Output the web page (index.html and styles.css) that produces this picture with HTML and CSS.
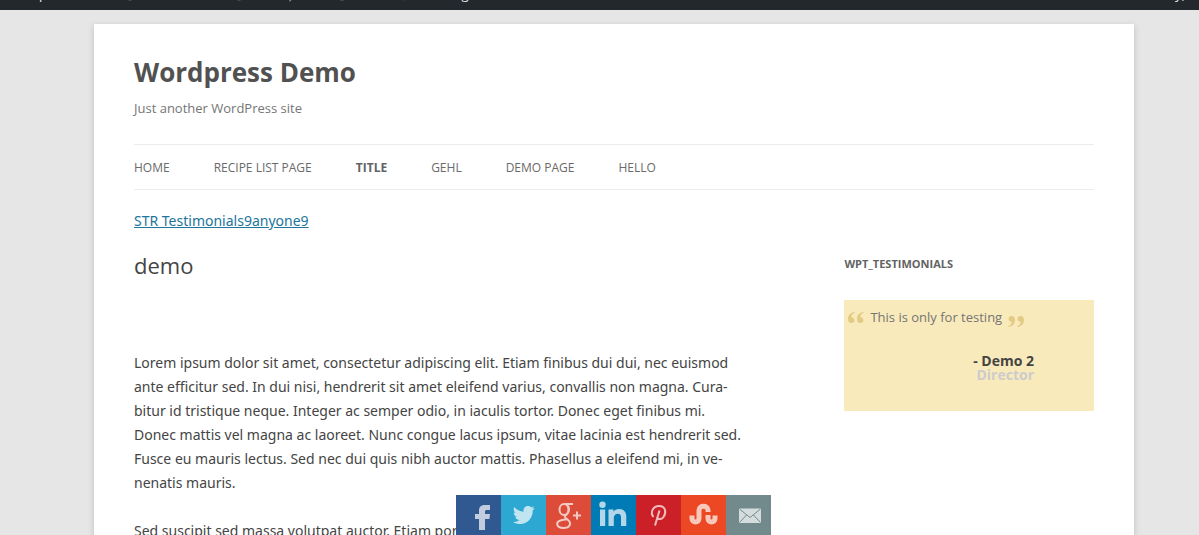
FILE: index.html
```html
<!DOCTYPE html>
<html lang="en">
<head>
    <meta charset="UTF-8">
    <meta name="viewport" content="width=device-width, initial-scale=1.0">
    <title>demo | Wordpress Demo</title>
    <link rel="stylesheet" href="styles.css">
</head>
<body>

    <!-- admin bar -->
    <div class="adminbar">
        <a class="ab-site" href="#">Wordpress Demo</a>
        <a class="ab-customize" href="#">
            <svg viewBox="0 0 20 20"><path d="M18 2c-1-1-5 2-9 7l3 3c4-4 7-9 6-10zM8 10c-3 0-2 4-6 6 3 2 9 1 9-3z"/></svg>
            Customize
        </a>
        <a class="ab-updates" href="#">
            <svg viewBox="0 0 20 20"><path d="M10 3a7 7 0 0 1 6 4l2-1v5h-5l2-2a5 5 0 0 0-9 0H3a7 7 0 0 1 7-6zM10 17a7 7 0 0 1-6-4l-2 1V9h5l-2 2a5 5 0 0 0 9 0h3a7 7 0 0 1-7 6z"/></svg>
            6
        </a>
        <a class="ab-comments" href="#">
            <svg viewBox="0 0 20 20"><path d="M3 3h14v10H9l-5 6v-6H3z"/></svg>
            0
        </a>
        <a class="ab-new" href="#">
            <svg viewBox="0 0 20 20"><path d="M8 4h4v4h4v4h-4v5H8v-5H4V8h4z"/></svg>
            New
        </a>
        <a class="ab-edit" href="#">
            <svg viewBox="0 0 20 20"><path d="M13 3l4 4-9 9-5 1 1-5z"/></svg>
            Edit Page
        </a>
        <a class="ab-account" href="#">Howdy,</a>
    </div>

    <div class="page">
        <div class="site">
            <header class="site-header">
                <h1 class="site-title"><a href="#">Wordpress Demo</a></h1>
                <h2 class="site-description">Just another WordPress site</h2>
                <nav class="main-navigation">
                    <ul>
                        <li><a href="#">Home</a></li>
                        <li><a href="#">Recipe List Page</a></li>
                        <li class="current"><a href="#">Title</a></li>
                        <li><a href="#">gehl</a></li>
                        <li><a href="#">Demo Page</a></li>
                        <li><a href="#">hello</a></li>
                    </ul>
                </nav>
            </header>

            <div class="top-link"><a href="#">STR Testimonials9anyone9</a></div>

            <div class="main">
                <article class="content">
                    <h1 class="entry-title">demo</h1>
                    <div class="entry-content">
                        <p>Lorem ipsum dolor sit amet, consectetur adipiscing elit. Etiam finibus dui dui, nec euismod<br>
                        ante efficitur sed. In dui nisi, hendrerit sit amet eleifend varius, convallis non magna. Cura-<br>
                        bitur id tristique neque. Integer ac semper odio, in iaculis tortor. Donec eget finibus mi.<br>
                        Donec mattis vel magna ac laoreet. Nunc congue lacus ipsum, vitae lacinia est hendrerit sed.<br>
                        Fusce eu mauris lectus. Sed nec dui quis nibh auctor mattis. Phasellus a eleifend mi, in ve-<br>
                        nenatis mauris.</p>
                        <p>Sed suscipit sed massa volutpat auctor. Etiam porta.</p>
                    </div>
                </article>

                <aside class="sidebar">
                    <h3 class="widget-title">wpt_testimonials</h3>
                    <div class="testimonial">
                        <blockquote>
                            <svg class="quote quote-open" viewBox="0 0 16 11"><path id="q" d="M6.500 0C2.500.5 0 3 0 7c0 2.600 1.400 4 3.300 4a2.900 2.900 0 0 0 3-3c0-1.700-1.200-2.800-2.800-2.800C3.300 3 4.500 1.500 6.800.8z"/><use href="#q" x="9"/></svg>
                            <span>This is only for testing</span>
                            <svg class="quote quote-close" viewBox="0 0 16 11"><use href="#q" transform="rotate(180 8 5.500)"/><use href="#q" transform="rotate(180 3.500 5.500)"/></svg>
                        </blockquote>
                        <p class="author">- Demo 2</p>
                        <p class="role">Director</p>
                    </div>
                </aside>
            </div>
        </div>
    </div>

    <!-- share buttons -->
    <div class="share">
        <a class="facebook" href="#" aria-label="Facebook">
            <svg viewBox="0 0 45 40"><path d="M23 35V24h-4v-5h4v-3.500c0-4 2.500-5.500 6-5.500h5v5h-3c-1.500 0-2 .6-2 1.800V19h5l-.6 5H29v11z"/></svg>
        </a>
        <a class="twitter" href="#" aria-label="Twitter">
            <svg viewBox="0 0 45 40"><path d="M34 13.200l-2.300 2.300C31.900 23.500 26 29 19.500 29c-2.800 0-5.300-.8-7.500-2.100 2.500.2 4.700-.4 6.500-1.800-2-.1-3.600-1.400-4.200-3.100h2c-2.200-.5-3.600-2.300-3.600-4.500l2 .5c-2-1.400-2.600-3.900-1.400-6 2.400 2.800 5.500 4.500 9.300 4.700-.7-3.100 1.500-5.700 4.400-5.700 1.300 0 2.500.5 3.300 1.400l2.900-1.100-1.900 2.500z"/></svg>
        </a>
        <a class="google" href="#" aria-label="Google Plus">
            <svg viewBox="0 0 45 40">
                <g class="line">
                    <ellipse cx="18" cy="14.500" rx="4.500" ry="5.500"/>
                    <path d="M27 9h-8M21 10c3 2.500 2.500 7-.5 9.500-3 2.500-1.500 3 1 5 5 4 2 8.500-4 8.500-7.500 0-8-6-3-7.500 2-.8 4-1 6-1"/>
                </g>
                <path d="M30 16.500h2v3h3v2h-3v3h-2v-3h-3v-2h3z"/>
            </svg>
        </a>
        <a class="linkedin" href="#" aria-label="LinkedIn">
            <svg viewBox="0 0 45 40"><circle cx="11.500" cy="9.700" r="3.200"/><path d="M9 14.500h5.200V31H9zM17.500 14.500h5v2.300c1.300-1.800 3-2.700 5.500-2.700 5 0 7.300 3 7.300 8V31H30v-8.300c0-2.500-.8-4-3-4s-4.200 1.500-4.200 4.300v8h-5.300z"/></svg>
        </a>
        <a class="pinterest" href="#" aria-label="Pinterest">
            <svg viewBox="0 0 45 40"><path class="line" d="M17.500 22c-4-5 0-11 5.500-11 7 0 7.500 7 4.500 11-2 3-6 2.500-6.500 0M23.500 15.500L19 30.500"/></svg>
        </a>
        <a class="stumble" href="#" aria-label="StumbleUpon">
            <svg viewBox="0 0 45 40"><path class="thick" d="M11 20.500v3c0 4.500 7 4.500 7 0V15c0-5 9-5 9 0v2M27 20v3.500c0 4.500 7 4.500 7 0v-3"/></svg>
        </a>
        <a class="email" href="#" aria-label="Email">
            <svg viewBox="0 0 45 40"><path d="M13 13.500h22V28H13z"/><path class="flap" d="M13.500 14L24 22.500 34.500 14M13.500 27.500l7-7.500M34.500 27.500l-7-7.500"/></svg>
        </a>
    </div>

</body>
</html>
```
FILE: styles.css
```css
* {
    box-sizing: border-box;
    margin: 0;
    padding: 0;
}

body {
    background-color: #e6e6e6;
    color: #444;
    font-family: "Open Sans", Helvetica, Arial, sans-serif;
    font-size: 14px;
    line-height: 24px;
}

/* admin bar */
.adminbar {
    display: flex;
    align-items: center;
    height: 32px;
    margin-top: -22px;
    padding: 0 14px 0 6px;
    background-color: #23282d;
    font-size: 13px;
    line-height: 32px;
}

.adminbar a {
    display: flex;
    align-items: center;
    gap: 2px;
    color: #eee;
    text-decoration: none;
    white-space: nowrap;
}

.adminbar svg {
    width: 18px;
    height: 18px;
    fill: #a0a5aa;
}

.ab-site {
    width: 119px;
}

.ab-customize {
    width: 105px;
}

.ab-updates {
    width: 56px;
}

.ab-comments {
    width: 47px;
}

.ab-new {
    width: 67px;
}

.adminbar .ab-account {
    margin-left: auto;
}

/* page */
.page {
    padding: 14px 0 48px 29px;
}

.site {
    max-width: 1040px;
    margin: 0 auto;
    padding: 0 40px 48px;
    background-color: #fff;
    box-shadow: 0 2px 6px rgba(100, 100, 100, 0.3);
}

.site-header {
    padding-top: 24px;
}

.site-title {
    font-size: 26px;
    line-height: 48px;
}

.site-title a {
    color: #515151;
    text-decoration: none;
}

.site-description {
    color: #757575;
    font-size: 13px;
    font-weight: normal;
}

.main-navigation {
    margin-top: 24px;
    border-top: 1px solid #ededed;
    border-bottom: 1px solid #ededed;
}

.main-navigation ul {
    display: flex;
    flex-wrap: wrap;
    gap: 0 44px;
    list-style: none;
}

.main-navigation a {
    display: block;
    padding-top: 2px;
    color: #6a6a6a;
    font-size: 12px;
    line-height: 42px;
    text-decoration: none;
    text-transform: uppercase;
}

.main-navigation .current a {
    color: #636363;
    font-weight: bold;
}

.top-link {
    padding-top: 19px;
}

.top-link a {
    color: #21759b;
}

.top-link,
.entry-content {
    font-family: "Noto Sans", "Open Sans", sans-serif;
}

.main {
    display: flex;
    justify-content: space-between;
    margin-top: 19px;
}

.content {
    width: 65.1%;
}

.entry-title {
    font-size: 22px;
    font-weight: normal;
    line-height: 27px;
}

.entry-content {
    padding-top: 72px;
}

.entry-content p {
    margin-bottom: 24px;
}

/* sidebar */
.sidebar {
    width: 26%;
}

.widget-title {
    margin-bottom: 24px;
    color: #636363;
    font-size: 11px;
    text-transform: uppercase;
}

.testimonial {
    padding: 5px 60px 29px 4px;
    background-color: #f9eabb;
}

.testimonial blockquote {
    display: flex;
    gap: 6px;
    margin-bottom: 25px;
    color: #757575;
    font-size: 13px;
    white-space: nowrap;
}

.quote {
    flex: none;
    width: 16px;
    height: 11px;
    margin-top: 7px;
    fill: #e3cb86;
}

.quote-close {
    margin-top: 11px;
}

.author,
.role {
    font-weight: bold;
    line-height: 14px;
    text-align: right;
}

.role {
    color: #ccc;
}

/* share buttons */
.share {
    display: flex;
    justify-content: center;
    position: fixed;
    bottom: 0;
    left: 0;
    width: 100%;
    padding-left: 28px;
}

.share a {
    width: 45px;
    height: 40px;
}

.share svg {
    display: block;
    width: 45px;
    height: 40px;
    fill: #fff;
    opacity: 0.7;
}

.share .line,
.share .thick,
.share .flap {
    fill: none;
    stroke: #fff;
    stroke-width: 2;
}

.share .thick {
    stroke-width: 5;
}

.share .flap {
    stroke: #738a8d;
    stroke-width: 1;
}

.facebook {
    background-color: #305891;
}

.twitter {
    background-color: #2ca8d2;
}

.google {
    background-color: #dd4b39;
}

.linkedin {
    background-color: #007bb6;
}

.pinterest {
    background-color: #cb2027;
}

.stumble {
    background-color: #eb4823;
}

.email {
    background-color: #738a8d;
}
```
